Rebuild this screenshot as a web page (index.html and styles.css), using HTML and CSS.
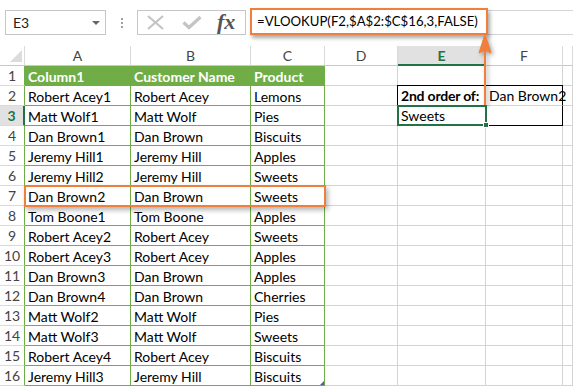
FILE: index.html
```html
<!DOCTYPE html>
<html>
<head>
<meta charset="utf-8">
<link rel="stylesheet" href="styles.css">
</head>
<body>
<div class="topbar">
  <div class="namebox"><span>E3</span><span class="caret"></span></div>
  <div class="dots"><i></i><i></i><i></i></div>
  <div class="btnbox">
    <svg class="ico" width="19" height="15" viewBox="0 0 19 15"><path d="M2 1 L17 14 M17 1 L2 14" stroke="#c4c4c4" stroke-width="2.2" fill="none"/></svg>
    <svg class="ico chk" width="20" height="15" viewBox="0 0 20 15"><path d="M1.5 7.5 L7 12.5 L18.5 2" stroke="#c4c4c4" stroke-width="3.2" fill="none"/></svg>
    <span class="fx">fx</span>
  </div>
  <div class="formula">
    <div class="fhl">=VLOOKUP(F2,$A$2:$C$16,3,FALSE)</div>
  </div>
</div>

<div class="sheet">
  <div class="ch corner"><span class="tri"></span></div>
  <div class="ch">A</div><div class="ch">B</div><div class="ch">C</div><div class="ch">D</div><div class="ch sel">E</div><div class="ch">F</div><div class="ch"></div>

  <div class="rh t">1</div><div class="c th">Column1</div><div class="c th">Customer Name</div><div class="c th">Product</div><div class="c"></div><div class="c"></div><div class="c"></div><div class="c"></div>

  <div class="rh t">2</div><div class="c tb">Robert Acey1</div><div class="c tb">Robert Acey</div><div class="c tb">Lemons</div><div class="c"></div><div class="c e2"><b>2nd order of:</b></div><div class="c f2">Dan Brown2</div><div class="c"></div>

  <div class="rh t rsel">3</div><div class="c tb">Matt Wolf1</div><div class="c tb">Matt Wolf</div><div class="c tb">Pies</div><div class="c"></div><div class="c e3">Sweets<span class="handle"></span></div><div class="c f3"></div><div class="c"></div>

  <div class="rh t">4</div><div class="c tb">Dan Brown1</div><div class="c tb">Dan Brown</div><div class="c tb">Biscuits</div><div class="c"></div><div class="c"></div><div class="c"></div><div class="c"></div>

  <div class="rh t">5</div><div class="c tb">Jeremy Hill1</div><div class="c tb">Jeremy Hill</div><div class="c tb">Apples</div><div class="c"></div><div class="c"></div><div class="c"></div><div class="c"></div>

  <div class="rh t">6</div><div class="c tb">Jeremy Hill2</div><div class="c tb">Jeremy Hill</div><div class="c tb">Sweets</div><div class="c"></div><div class="c"></div><div class="c"></div><div class="c"></div>

  <div class="rh t">7</div><div class="c tb">Dan Brown2</div><div class="c tb">Dan Brown</div><div class="c tb">Sweets</div><div class="c"></div><div class="c"></div><div class="c"></div><div class="c"></div>

  <div class="rh t">8</div><div class="c tb">Tom Boone1</div><div class="c tb">Tom Boone</div><div class="c tb">Apples</div><div class="c"></div><div class="c"></div><div class="c"></div><div class="c"></div>

  <div class="rh t">9</div><div class="c tb">Robert Acey2</div><div class="c tb">Robert Acey</div><div class="c tb">Sweets</div><div class="c"></div><div class="c"></div><div class="c"></div><div class="c"></div>

  <div class="rh t">10</div><div class="c tb">Robert Acey3</div><div class="c tb">Robert Acey</div><div class="c tb">Apples</div><div class="c"></div><div class="c"></div><div class="c"></div><div class="c"></div>

  <div class="rh t">11</div><div class="c tb">Dan Brown3</div><div class="c tb">Dan Brown</div><div class="c tb">Apples</div><div class="c"></div><div class="c"></div><div class="c"></div><div class="c"></div>

  <div class="rh t">12</div><div class="c tb">Dan Brown4</div><div class="c tb">Dan Brown</div><div class="c tb">Cherries</div><div class="c"></div><div class="c"></div><div class="c"></div><div class="c"></div>

  <div class="rh t">13</div><div class="c tb">Matt Wolf2</div><div class="c tb">Matt Wolf</div><div class="c tb">Pies</div><div class="c"></div><div class="c"></div><div class="c"></div><div class="c"></div>

  <div class="rh t">14</div><div class="c tb">Matt Wolf3</div><div class="c tb">Matt Wolf</div><div class="c tb">Sweets</div><div class="c"></div><div class="c"></div><div class="c"></div><div class="c"></div>

  <div class="rh t">15</div><div class="c tb">Robert Acey4</div><div class="c tb">Robert Acey</div><div class="c tb">Biscuits</div><div class="c"></div><div class="c"></div><div class="c"></div><div class="c"></div>

  <div class="rh t">16</div><div class="c tb">Jeremy Hill3</div><div class="c tb">Jeremy Hill</div><div class="c tb last">Biscuits<span class="resize"></span></div><div class="c"></div><div class="c"></div><div class="c"></div><div class="c"></div>
</div>

<div class="rowmark"></div>
<svg class="arrow" width="16" height="76" viewBox="0 0 16 76">
  <path d="M8 1 L14 20 L8 17 L2 20 Z" fill="#f07f3c" stroke="#f07f3c" stroke-width="1" stroke-linejoin="round"/>
  <rect x="7" y="17" width="2" height="56" fill="#f07f3c"/>
</svg>
</body>
</html>
```

FILE: styles.css
```css
* { box-sizing: border-box; }
html, body { margin: 0; padding: 0; background: #fff; }
body {
  position: relative;
  width: 573px;
  height: 387px;
  overflow: hidden;
  font-family: "Lato", "Liberation Sans", sans-serif;
  font-size: 14px;
  color: #000;
}

.topbar {
  height: 46px;
  display: flex;
  align-items: flex-start;
  padding-top: 10px;
  padding-left: 5px;
}
.namebox {
  width: 101px;
  height: 25px;
  border: 1px solid #c6c6c6;
  display: flex;
  align-items: center;
  justify-content: space-between;
  padding: 0 5px 0 7px;
  font-size: 14px;
  color: #222;
}
.caret {
  width: 0; height: 0;
  border-left: 4px solid transparent;
  border-right: 4px solid transparent;
  border-top: 4px solid #666;
}
.dots {
  width: 31px;
  height: 25px;
  display: flex;
  flex-direction: column;
  align-items: center;
  justify-content: center;
  gap: 2px;
}
.dots i { display: block; width: 2px; height: 2px; background: #a0a0a0; }
.btnbox {
  width: 109px;
  height: 25px;
  border: 1px solid #c6c6c6;
  display: flex;
  align-items: center;
  padding-left: 8px;
}
.btnbox .chk { margin-left: 17px; }
.fx {
  font-family: "Liberation Serif", "DejaVu Serif", serif;
  font-style: italic;
  font-weight: bold;
  font-size: 22px;
  color: #555;
  margin-left: 15px;
  line-height: 1;
  margin-top: -2px;
}
.formula {
  flex: 1;
  margin-left: 4px;
  height: 25px;
  border-top: 1px solid #d4d4d4;
  border-bottom: 1px solid #d4d4d4;
}
.fhl {
  width: 238px;
  height: 27px;
  margin-top: -3px;
  border: 2px solid #f07f3c;
  box-shadow: 2px 3px 4px rgba(0,0,0,0.35);
  background: #fff;
  padding-left: 5px;
  line-height: 22px;
  font-size: 13.2px;
  white-space: nowrap;
}

.sheet {
  display: grid;
  grid-template-columns: 25px 106px 120px 74px 73px 88px 77px 10px;
  grid-template-rows: repeat(17, 20px);
}
.ch {
  border-right: 1px solid #dadada;
  border-bottom: 1px solid #c8c8c8;
  text-align: center;
  font-size: 14px;
  line-height: 20px;
  color: #444;
}
.ch.corner { position: relative; }
.tri {
  position: absolute;
  left: 10px; top: 4px;
  width: 0; height: 0;
  border-left: 12px solid transparent;
  border-bottom: 12px solid #dcdcdc;
}
.ch.sel {
  background: #e1e1e1;
  border-bottom: 2px solid #217346;
  color: #217346;
  font-weight: bold;
}
.rh {
  border-bottom: 1px solid #dadada;
  border-right: 1px solid #70ad47;
  text-align: center;
  font-size: 14px;
  line-height: 20px;
  color: #444;
}
.rh.rsel {
  background: #e1e1e1;
  border-right: 2px solid #217346;
  color: #217346;
  font-weight: bold;
}
.c {
  position: relative;
  border-right: 1px solid #d4d4d4;
  border-bottom: 1px solid #d4d4d4;
  padding-left: 3px;
  line-height: 21px;
  white-space: nowrap;
  overflow: visible;
}
.c.th {
  background: #70ad47;
  color: #fff;
  font-weight: bold;
  border-right-color: #70ad47;
  border-bottom-color: #70ad47;
}
.c.tb {
  border-right-color: #70ad47;
  border-bottom-color: #70ad47;
}
.c.e2 {
  border-top: 1px solid #000;
  border-left: 1px solid #000;
  border-right-color: #000;
  margin-left: -1px;
  margin-top: -1px;
  padding-left: 3px;
  line-height: 20px;
  letter-spacing: -0.2px;
}
.c.f2 {
  border-top: 1px solid #000;
  border-right-color: #000;
  margin-top: -1px;
  line-height: 20px;
}
.c.f3 {
  border-right-color: #000;
  border-bottom-color: #000;
}
.c.e3 {
  border: 2px solid #217346;
  margin: -1px 0 0 -1px;
  width: 90px;
  height: 21px;
  padding-left: 2px;
  line-height: 18px;
  z-index: 2;
}
.handle {
  position: absolute;
  right: -4px;
  bottom: -4px;
  width: 6px;
  height: 6px;
  background: #217346;
  border: 1px solid #fff;
}
.resize {
  position: absolute;
  right: 0;
  bottom: 0;
  width: 0; height: 0;
  border-left: 4px solid transparent;
  border-bottom: 4px solid #4a5fa8;
}

.rowmark {
  position: absolute;
  left: 24px;
  top: 185px;
  width: 302px;
  height: 22px;
  border: 2px solid #f07f3c;
  box-shadow: 2px 3px 5px rgba(0,0,0,0.3);
}
.arrow {
  position: absolute;
  left: 477px;
  top: 33px;
  filter: drop-shadow(2px 2px 2px rgba(0,0,0,0.35));
}
```
